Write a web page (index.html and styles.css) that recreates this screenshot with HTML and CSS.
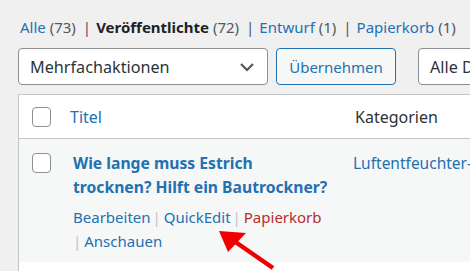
FILE: index.html
```html
<!DOCTYPE html>
<html lang="de">
<head>
<meta charset="utf-8">
<link rel="stylesheet" href="styles.css">
</head>
<body>
<div class="page">
  <ul class="subsubsub">
    <li><a class="link">Alle <span class="count">(73)</span></a><span class="sep">|</span></li>
    <li><a class="current">Veröffentlichte <span class="count">(72)</span></a><span class="sep">|</span></li>
    <li><a class="link">Entwurf <span class="count">(1)</span></a><span class="sep">|</span></li>
    <li><a class="link">Papierkorb <span class="count">(1)</span></a></li>
  </ul>
  <div class="tablenav">
    <div class="select bulk">
      <span>Mehrfachaktionen</span>
      <svg class="chev" width="16" height="10" viewBox="0 0 16 10"><path d="M2 2 L8 8 L14 2" fill="none" stroke="#50575e" stroke-width="2.2"/></svg>
    </div>
    <div class="button">Übernehmen</div>
    <div class="select dates"><span>Alle Daten</span></div>
  </div>
  <div class="table">
    <div class="thead">
      <div class="cb"><span class="box"></span></div>
      <div class="col-title"><a class="link">Titel</a></div>
      <div class="col-cat">Kategorien</div>
    </div>
    <div class="row">
      <div class="cb"><span class="box"></span></div>
      <div class="col-title">
        <a class="row-title">Wie lange muss Estrich trocknen? Hilft ein Bautrockner?</a>
        <div class="row-actions">
          <span class="act"><a class="link">Bearbeiten</a></span>
          <span class="act"><span class="asep">|</span><a class="link">QuickEdit</a></span>
          <span class="act"><span class="asep">|</span><a class="trash">Papierkorb</a></span>
          <span class="act"><span class="asep">|</span><a class="link">Anschauen</a></span>
        </div>
      </div>
      <div class="col-cat"><a class="link">Luftentfeuchter-Tests</a></div>
    </div>
    <div class="row2"></div>
  </div>
</div>
<svg class="arrow" width="470" height="271" viewBox="0 0 470 271">
  <line x1="273" y1="268" x2="234" y2="241" stroke="#f00000" stroke-width="4.5"/>
  <polygon points="219,231 246,233 228,252" fill="#f00000"/>
</svg>
</body>
</html>
```
FILE: styles.css
```css
* { box-sizing: border-box; }
html, body { margin: 0; padding: 0; }
body {
  background: #f0f0f1;
  width: 470px;
  height: 271px;
  overflow: hidden;
  position: relative;
  font-family: "Noto Sans", "Open Sans", sans-serif;
  color: #1d2327;
}
.page {
  padding: 15px 0 0 18px;
  width: 700px;
}
.link { color: #2271b1; }
a { text-decoration: none; }
.subsubsub {
  list-style: none;
  margin: 0 0 9px 2px;
  padding: 0;
  display: flex;
  font-size: 15px;
  line-height: 24px;
  color: #50575e;
  white-space: nowrap;
}
.subsubsub .current { color: #1d2327; font-weight: 700; }
.subsubsub .count { color: #50575e; font-weight: 400; }
.subsubsub .sep { margin: 0 5px 0 7px; color: #50575e; }
.tablenav {
  display: flex;
  gap: 8px;
  height: 37px;
  margin-bottom: 9px;
}
.select {
  height: 37px;
  border: 1px solid #8c8f94;
  border-radius: 4px;
  background: #fff;
  display: flex;
  align-items: center;
  font-size: 16.2px;
  color: #2c3338;
  padding: 0 12px 0 11px;
}
.bulk { width: 250px; justify-content: space-between; }
.dates { width: 140px; margin-left: 14px; }
.button {
  height: 37px;
  width: 120px;
  border: 1px solid #2271b1;
  border-radius: 4px;
  background: #f6f7f7;
  color: #2271b1;
  font-size: 15px;
  display: flex;
  align-items: center;
  justify-content: center;
}
.table {
  border: 1px solid #c3c4c7;
  background: #fff;
  width: 680px;
}
.thead {
  display: flex;
  height: 44px;
  border-bottom: 1px solid #c3c4c7;
  align-items: center;
  font-size: 16px;
}
.cb { width: 51px; padding-left: 13px; flex: none; }
.box {
  display: block;
  width: 19px;
  height: 20px;
  border: 1px solid #8c8f94;
  border-radius: 4px;
  background: #fff;
}
.thead .col-title { width: 285px; flex: none; }
.col-cat { flex: 1; color: #2c3338; }
.row {
  display: flex;
  background: #f6f7f7;
  padding: 12px 0 9px;
  height: 123px;
}
.row .cb { padding-top: 2px; }
.row .col-title { width: 283px; flex: none; padding-left: 3px; }
.row .col-cat { font-size: 15.5px; line-height: 24px; white-space: nowrap; }
.row-title {
  display: block;
  color: #2271b1;
  font-weight: 700;
  font-size: 15.7px;
  line-height: 24px;
  width: 258px;
}
.row-actions {
  margin-top: 6px;
  font-size: 15px;
  line-height: 24px;
  width: 265px;
  word-spacing: -2px;
}
.act { white-space: nowrap; word-spacing: 0; }
.asep { color: #c3c4c7; margin: 0 3px 0 0; }
.trash { color: #b32d2e; }
.row2 { height: 40px; background: #fff; }
.arrow { position: absolute; left: 0; top: 0; }
```
